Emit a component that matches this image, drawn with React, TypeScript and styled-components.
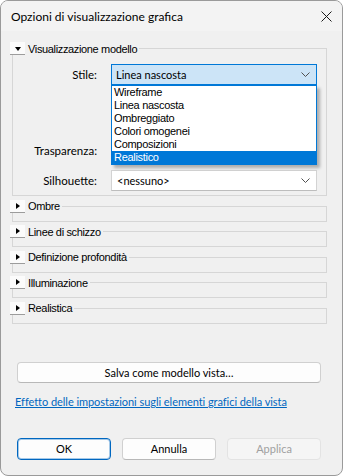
import React from "react";
import styled, { createGlobalStyle } from "styled-components";

const Global = createGlobalStyle`
  html, body { margin: 0; padding: 0; background: #ffffff; }
  * { box-sizing: border-box; }
`;

const UI = `Lato, "Liberation Sans", sans-serif`;
const CLASSIC = `"Liberation Sans", Arial, sans-serif`;

const Window = styled.div`
  width: 343px;
  height: 476px;
  border: 1px solid #9a9a9a;
  border-radius: 8px;
  overflow: hidden;
  background: #f0f0f0;
  display: flex;
  flex-direction: column;
  font-family: ${UI};
  color: #000;
`;

const TitleBar = styled.div`
  height: 30px;
  flex: none;
  display: flex;
  align-items: center;
  justify-content: space-between;
  padding: 0 10px 0 10px;
  background: #f3f3f3;
`;

const Title = styled.span`
  font-family: ${UI};
  font-size: 12px;
`;

const Close = styled.button`
  width: 12px;
  height: 12px;
  border: 0;
  padding: 0;
  background: transparent;
  display: flex;
  align-items: center;
  justify-content: center;
`;

const Body = styled.div`
  flex: 1;
  display: flex;
  flex-direction: column;
  padding: 11px 0 0 0;
`;

const Groups = styled.div`
  margin-left: 9px;
  width: 317px;
  display: flex;
  flex-direction: column;
  gap: 3.6px;
`;

const Group = styled.div`
  position: relative;
  padding-top: 6px;
`;

const Frame = styled.div<{ $collapsed?: boolean }>`
  margin-left: 2px;
  border: 1px solid #d6d6d6;
  height: ${(p) => (p.$collapsed ? "16px" : "auto")};
`;

const GroupHeader = styled.div`
  position: absolute;
  top: 0;
  left: 0;
  height: 13px;
  display: flex;
  align-items: center;
  gap: 3px;
  padding-right: 2px;
  background: #f0f0f0;
  font-family: ${CLASSIC};
  font-size: 11px;
  letter-spacing: -0.35px;
`;

const Toggle = styled.span`
  width: 15px;
  height: 13px;
  background: #fbfbfb;
  border-bottom: 1px solid #9c9c9c;
  display: flex;
  align-items: center;
  justify-content: center;
`;

const Tri = styled.span<{ $open?: boolean }>`
  width: 0;
  height: 0;
  ${(p) =>
    p.$open
      ? `border-left: 3.5px solid transparent; border-right: 3.5px solid transparent; border-top: 4px solid #000; margin-top: 1px;`
      : `border-top: 3.5px solid transparent; border-bottom: 3.5px solid transparent; border-left: 4px solid #000; margin-left: 1px;`}
`;

const FormGrid = styled.div`
  display: grid;
  grid-template-columns: 84px 206px;
  grid-template-rows: 21px 54px 22px 30px;
  column-gap: 14px;
  padding: 15px 9px 4px 0;
`;

const Label = styled.div<{ $end?: boolean }>`
  font-family: ${UI};
  font-size: 11.5px;
  text-align: right;
  align-self: ${(p) => (p.$end ? "end" : "center")};
  height: ${(p) => (p.$end ? "21px" : "auto")};
  line-height: ${(p) => (p.$end ? "21px" : "normal")};
`;

const ComboWrap = styled.div<{ $end?: boolean }>`
  position: relative;
  align-self: ${(p) => (p.$end ? "end" : "stretch")};
  height: 21px;
`;

const Combo = styled.div<{ $focused?: boolean }>`
  height: 21px;
  display: flex;
  align-items: center;
  justify-content: space-between;
  padding: 0 6px 0 4px;
  border: 1px solid ${(p) => (p.$focused ? "#0078d7" : "#d3d3d3")};
  border-bottom-color: ${(p) => (p.$focused ? "#0078d7" : "#bdbdbd")};
  background: ${(p) => (p.$focused ? "#cce4f7" : "#ffffff")};
  font-family: ${UI};
  font-size: 11px;
`;

const ComboText = styled.span<{ $pad?: number }>`
  padding-left: ${(p) => p.$pad ?? 0}px;
`;

const List = styled.div`
  position: absolute;
  top: 100%;
  left: 0;
  right: 0;
  border: 1px solid #0078d7;
  background: #ffffff;
  box-shadow: 3px 3px 3px rgba(0, 0, 0, 0.28);
  z-index: 2;
`;

const Item = styled.div<{ $selected?: boolean }>`
  height: 13px;
  line-height: 13px;
  padding-left: 2px;
  font-family: ${CLASSIC};
  font-size: 11px;
  letter-spacing: -0.3px;
  background: ${(p) => (p.$selected ? "#0078d7" : "transparent")};
  color: ${(p) => (p.$selected ? "#ffffff" : "#000000")};
`;

const Spacer = styled.div``;

const WideButton = styled.button`
  margin: 38px 0 0 16px;
  width: 304px;
  height: 21px;
  border: 1px solid #d0d0d0;
  border-bottom-color: #b8b8b8;
  border-radius: 4px;
  background: #fdfdfd;
  font-family: ${UI};
  font-size: 11px;
  color: #000;
  padding: 0;
`;

const Link = styled.a`
  margin: 11px 0 0 14px;
  font-family: ${UI};
  font-size: 11px;
  letter-spacing: -0.05px;
  color: #0067c0;
  text-decoration: underline;
  line-height: 15px;
  cursor: pointer;
`;

const ButtonRow = styled.div`
  margin: 29px 0 0 16px;
  width: 304px;
  display: flex;
  justify-content: space-between;
`;

const DlgButton = styled.button<{ $variant?: "default" | "normal" | "disabled" }>`
  width: 94px;
  height: 22px;
  border-radius: 4px;
  padding: 0;
  font-family: ${UI};
  font-size: 11px;
  background: ${(p) => (p.$variant === "disabled" ? "#f5f5f5" : "#fdfdfd")};
  color: ${(p) => (p.$variant === "disabled" ? "#a0a0a0" : "#000")};
  border: 1px solid
    ${(p) =>
      p.$variant === "default"
        ? "#0067c0"
        : p.$variant === "disabled"
        ? "#e3e3e3"
        : "#d0d0d0"};
  border-bottom-color: ${(p) =>
    p.$variant === "default" ? "#0067c0" : p.$variant === "disabled" ? "#e3e3e3" : "#b8b8b8"};
  box-shadow: ${(p) =>
    p.$variant === "default" ? "inset 0 0 0 1px rgba(0,103,192,0.35)" : "none"};
`;

const Chevron = () => (
  <svg width="9" height="5" viewBox="0 0 9 5">
    <path d="M0.5 0.5 L4.5 4.5 L8.5 0.5" fill="none" stroke="#505050" strokeWidth="1" />
  </svg>
);

const collapsed = ["Ombre", "Linee di schizzo", "Definizione profondità", "Illuminazione", "Realistica"];
const styles = ["Wireframe", "Linea nascosta", "Ombreggiato", "Colori omogenei", "Composizioni", "Realistico"];

export default function App() {
  return (
    <>
      <Global />
      <Window>
        <TitleBar>
          <Title>Opzioni di visualizzazione grafica</Title>
          <Close aria-label="Chiudi">
            <svg width="11" height="11" viewBox="0 0 11 11">
              <path d="M0.5 0.5 L10.5 10.5 M10.5 0.5 L0.5 10.5" stroke="#1a1a1a" strokeWidth="1" />
            </svg>
          </Close>
        </TitleBar>
        <Body>
          <Groups>
            <Group>
              <GroupHeader>
                <Toggle>
                  <Tri $open />
                </Toggle>
                Visualizzazione modello
              </GroupHeader>
              <Frame>
                <FormGrid>
                  <Label>Stile:</Label>
                  <ComboWrap>
                    <Combo $focused>
                      <ComboText>Linea nascosta</ComboText>
                      <Chevron />
                    </Combo>
                    <List>
                      {styles.map((s) => (
                        <Item key={s} $selected={s === "Realistico"}>
                          {s}
                        </Item>
                      ))}
                    </List>
                  </ComboWrap>
                  <Spacer />
                  <Spacer />
                  <Label>Trasparenza:</Label>
                  <Spacer />
                  <Label $end>Silhouette:</Label>
                  <ComboWrap $end>
                    <Combo>
                      <ComboText $pad={1}>&lt;nessuno&gt;</ComboText>
                      <Chevron />
                    </Combo>
                  </ComboWrap>
                </FormGrid>
              </Frame>
            </Group>
            {collapsed.map((name) => (
              <Group key={name}>
                <GroupHeader>
                  <Toggle>
                    <Tri />
                  </Toggle>
                  {name}
                </GroupHeader>
                <Frame $collapsed />
              </Group>
            ))}
          </Groups>
          <WideButton>Salva come modello vista…</WideButton>
          <Link>Effetto delle impostazioni sugli elementi grafici della vista</Link>
          <ButtonRow>
            <DlgButton $variant="default">OK</DlgButton>
            <DlgButton $variant="normal">Annulla</DlgButton>
            <DlgButton $variant="disabled">Applica</DlgButton>
          </ButtonRow>
        </Body>
      </Window>
    </>
  );
}
